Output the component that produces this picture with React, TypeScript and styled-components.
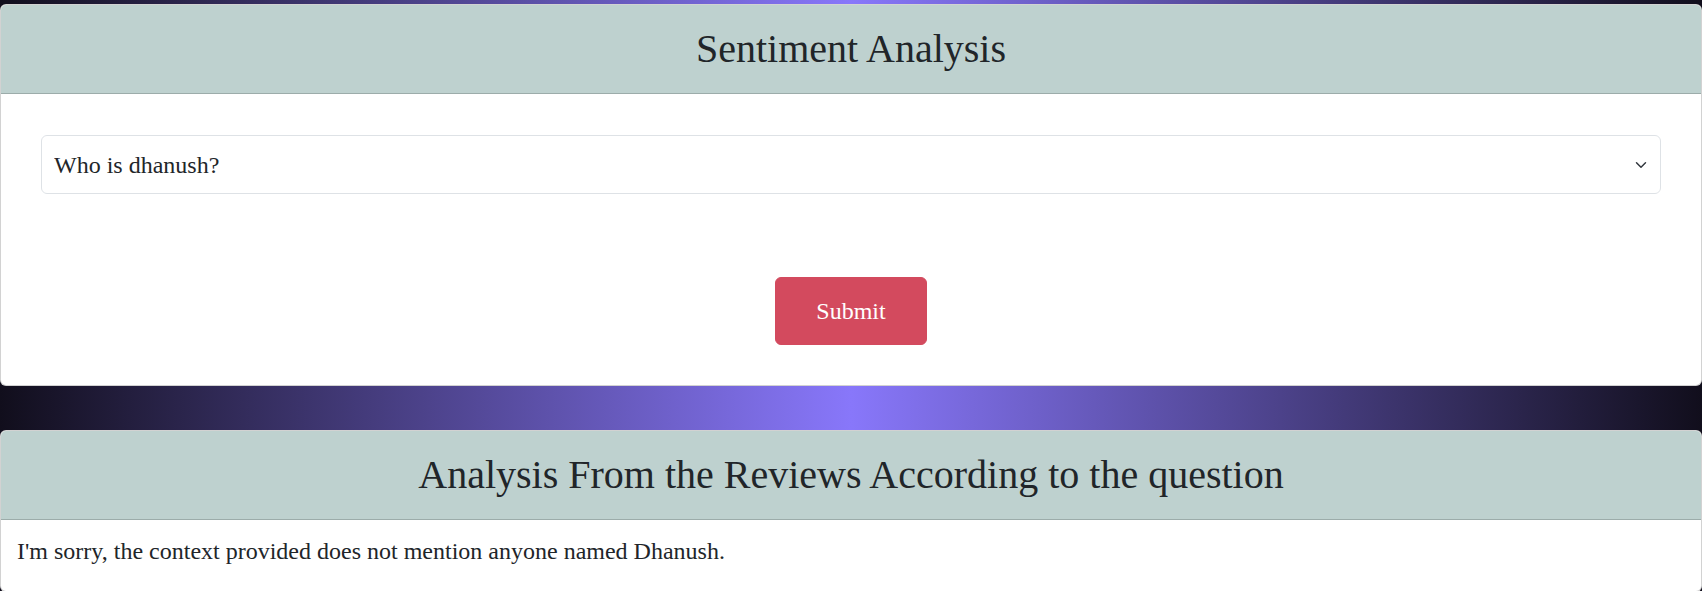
import React, { useState } from 'react';
import styled, { createGlobalStyle } from 'styled-components';

const GlobalStyle = createGlobalStyle`
  html, body {
    margin: 0;
    padding: 0;
  }
  body {
    font-family: "Liberation Serif", "Times New Roman", serif;
    color: #212529;
    background: #110e1c;
  }
  * {
    box-sizing: border-box;
  }
`;

const Page = styled.div`
  display: flex;
  flex-direction: column;
  gap: 44px;
  padding-top: 4px;
  min-height: 591px;
  background: linear-gradient(90deg, #110e1c 0%, #8877fa 50%, #110e1c 100%);
`;

const Card = styled.div`
  display: flex;
  flex-direction: column;
  background: #fff;
  border: 1px solid rgba(0, 0, 0, 0.175);
  border-radius: 6px;
  overflow: hidden;
`;

const CardHeader = styled.div`
  background: #bed1cf;
  border-bottom: 1px solid rgba(0, 0, 0, 0.175);
  padding: 20px 16px;
  text-align: center;
`;

const Title = styled.h1`
  margin: 0;
  font-size: 40px;
  font-weight: 400;
  line-height: 48px;
`;

const FormBody = styled.form`
  display: flex;
  flex-direction: column;
  align-items: center;
  gap: 83px;
  padding: 41px 40px 40px;
`;

const SelectWrap = styled.div`
  position: relative;
  width: 100%;
`;

const Select = styled.select`
  appearance: none;
  width: 100%;
  height: 59px;
  padding: 0 40px 0 12px;
  font-family: inherit;
  font-size: 24px;
  line-height: 36px;
  color: #212529;
  background: #fff;
  border: 1px solid #dee2e6;
  border-radius: 6px;
  outline: none;
`;

const Chevron = styled.svg`
  position: absolute;
  right: 14px;
  top: 50%;
  width: 12px;
  height: 12px;
  transform: translateY(-50%);
  pointer-events: none;
`;

const SubmitButton = styled.button`
  font-family: inherit;
  font-size: 24px;
  line-height: 36px;
  padding: 15px 40px;
  color: #fff;
  background: #d34a5e;
  border: 1px solid #d34a5e;
  border-radius: 6px;
  cursor: pointer;
`;

const AnswerBody = styled.div`
  padding: 13px 16px 22px;
  font-size: 24px;
  line-height: 36px;
`;

const questions = [
  'Who is dhanush?',
  'What do people think about the movie?',
  'How was the acting?',
];

export default function App() {
  const [question, setQuestion] = useState(questions[0]);

  return (
    <>
      <GlobalStyle />
      <Page>
        <Card>
          <CardHeader>
            <Title>Sentiment Analysis</Title>
          </CardHeader>
          <FormBody onSubmit={(e) => e.preventDefault()}>
            <SelectWrap>
              <Select value={question} onChange={(e) => setQuestion(e.target.value)}>
                {questions.map((q) => (
                  <option key={q} value={q}>
                    {q}
                  </option>
                ))}
              </Select>
              <Chevron viewBox="0 0 16 16" fill="none">
                <path
                  d="m2 5 6 6 6-6"
                  stroke="#343a40"
                  strokeWidth="2"
                  strokeLinecap="round"
                  strokeLinejoin="round"
                />
              </Chevron>
            </SelectWrap>
            <SubmitButton type="submit">Submit</SubmitButton>
          </FormBody>
        </Card>
        <Card>
          <CardHeader>
            <Title>Analysis From the Reviews According to the question</Title>
          </CardHeader>
          <AnswerBody>
            I'm sorry, the context provided does not mention anyone named Dhanush.
          </AnswerBody>
        </Card>
      </Page>
    </>
  );
}
